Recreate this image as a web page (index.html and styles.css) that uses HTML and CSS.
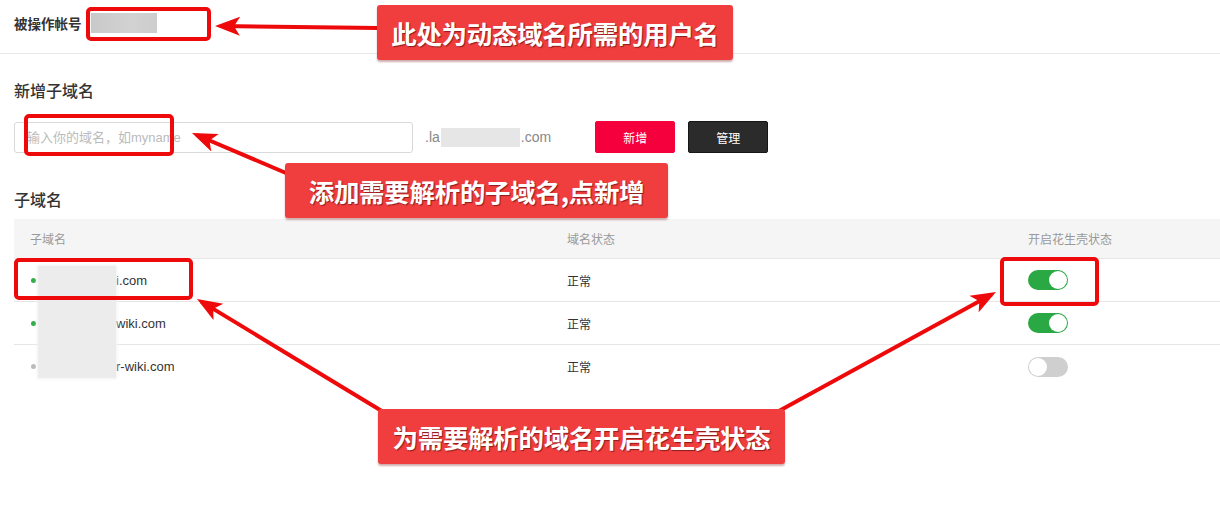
FILE: index.html
```html
<!DOCTYPE html>
<html lang="zh-CN">
<head>
<meta charset="utf-8">
<title>子域名管理</title>
<link rel="stylesheet" href="styles.css">
</head>
<body>
<div class="page">
  <div class="account">
    <span class="account-label">被操作帐号</span>
    <span class="account-value"></span>
  </div>

  <h2 class="section-title first">新增子域名</h2>
  <div class="add-row">
    <input class="domain-input" type="text" placeholder="输入你的域名，如myname">
    <span class="suffix">.la<span class="suffix-mask"></span>.com</span>
    <button class="btn btn-add">新增</button>
    <button class="btn btn-manage">管理</button>
  </div>

  <h2 class="section-title second">子域名</h2>
  <div class="table">
    <div class="row head">
      <div class="cell c1">子域名</div>
      <div class="cell">域名状态</div>
      <div class="cell">开启花生壳状态</div>
    </div>
    <div class="row">
      <div class="cell c1"><span class="dot on"></span><span class="hidden-part"></span>i.com</div>
      <div class="cell">正常</div>
      <div class="cell"><span class="toggle on"><span class="knob"></span></span></div>
    </div>
    <div class="row">
      <div class="cell c1"><span class="dot on"></span><span class="hidden-part"></span>wiki.com</div>
      <div class="cell">正常</div>
      <div class="cell"><span class="toggle on"><span class="knob"></span></span></div>
    </div>
    <div class="row last">
      <div class="cell c1"><span class="dot off"></span><span class="hidden-part"></span>r-wiki.com</div>
      <div class="cell">正常</div>
      <div class="cell"><span class="toggle off"><span class="knob"></span></span></div>
    </div>
    <div class="blur-mask"></div>
  </div>

  <svg class="annot" width="1220" height="520" viewBox="0 0 1220 520">
    <defs>
      <marker id="ah" markerUnits="userSpaceOnUse" markerWidth="26" markerHeight="20" viewBox="0 0 26 20" refX="20" refY="10" orient="auto">
        <path d="M0,0.5 L25,10 L0,19.5 L6,10 Z" fill="#ee0a0a"/>
      </marker>
    </defs>
    <g fill="none" stroke="#ee0a0a" stroke-width="4">
      <rect x="88" y="9" width="121" height="30" rx="3"/>
      <rect x="26" y="116" width="146" height="38" rx="3"/>
      <rect x="16" y="260" width="175" height="38" rx="3"/>
      <rect x="1002" y="259" width="95" height="45" rx="3"/>
    </g>
    <g stroke="#ee0a0a" stroke-width="4" marker-end="url(#ah)">
      <line x1="378" y1="28" x2="220" y2="26"/>
      <line x1="300" y1="179" x2="196.6" y2="135"/>
      <line x1="390" y1="416" x2="201.3" y2="301.6"/>
      <line x1="768" y1="417" x2="991.6" y2="294.4"/>
    </g>
  </svg>

  <div class="callout call-1">此处为动态域名所需的用户名</div>
  <div class="callout call-2">添加需要解析的子域名,点新增</div>
  <div class="callout call-3">为需要解析的域名开启花生壳状态</div>
</div>
</body>
</html>
```

FILE: styles.css
```css
* { box-sizing: border-box; }
html, body { margin: 0; padding: 0; background: #fff; }
body {
  font-family: "Liberation Sans", "Noto Sans CJK SC", sans-serif;
  color: #333;
}
.page {
  position: relative;
  width: 1220px;
  height: 520px;
  overflow: hidden;
}
.account {
  height: 54px;
  padding: 0 0 7px 14px;
  border-bottom: 1px solid #e8e8e8;
  display: flex;
  align-items: center;
}
.account-label {
  font-size: 13.5px;
  font-weight: 700;
  color: #333;
}
.account-value {
  width: 66px;
  height: 20px;
  margin-left: 9px;
  background: linear-gradient(90deg, #c9c9c9, #d2d2d2 60%, #cdcdcd);
}
.section-title {
  margin: 0;
  padding-left: 14px;
  font-size: 16px;
  line-height: 22px;
  font-weight: 500;
  color: #333;
}
.section-title.first { margin-top: 27px; }
.section-title.second { margin-top: 37px; }
.add-row {
  margin-top: 18px;
  padding-left: 14px;
  display: flex;
  align-items: center;
  height: 32px;
}
.domain-input {
  width: 399px;
  height: 31px;
  border: 1px solid #d9d9d9;
  border-radius: 3px;
  padding: 0 12px;
  font-family: "Liberation Sans", "Noto Sans CJK SC", sans-serif;
  font-size: 13px;
  color: #333;
  outline: none;
}
.domain-input::placeholder { color: #bbb; }
.suffix {
  margin-left: 12px;
  font-size: 14px;
  color: #888;
  display: flex;
  align-items: center;
}
.suffix-mask {
  display: inline-block;
  width: 79px;
  height: 19px;
  background: #e6e6e6;
  margin: 0 1px;
}
.btn {
  width: 80px;
  height: 32px;
  border-radius: 2px;
  font-family: "Liberation Sans", "Noto Sans CJK SC", sans-serif;
  font-size: 12px;
  color: #fff;
  cursor: pointer;
  padding: 0;
}
.btn-add {
  margin-left: 44px;
  background: #f5003d;
  border: 1px solid #f5003d;
}
.btn-manage {
  margin-left: 13px;
  background: #2b2b2b;
  border: 1px solid #161616;
}
.table {
  position: relative;
  margin: 7px 0 0 14px;
}
.row {
  display: grid;
  grid-template-columns: 553px 461px 1fr;
  height: 43px;
  border-bottom: 1px solid #e6e6e6;
  align-items: center;
  font-size: 12px;
  color: #333;
}
.row.head {
  height: 40px;
  background: #f5f5f5;
  color: #999;
}
.row.last { border-bottom: none; }
.cell { display: flex; align-items: center; }
.cell.c1 { padding-left: 16px; font-size: 13px; }
.row.head .cell.c1 { font-size: 12px; }
.dot {
  width: 5px;
  height: 5px;
  border-radius: 50%;
  margin: 0 3px 0 1px;
}
.dot.on { background: #31ad46; }
.dot.off { background: #bbb; }
.hidden-part {
  display: inline-block;
  width: 77px;
  height: 1px;
}
.toggle {
  position: relative;
  width: 40px;
  height: 20px;
  border-radius: 10px;
  display: inline-block;
}
.toggle.on { background: #2aa844; }
.toggle.off { background: #cfcfcf; }
.knob {
  position: absolute;
  top: 1px;
  width: 18px;
  height: 18px;
  border-radius: 50%;
  background: #fff;
}
.toggle.on .knob { left: 21px; }
.toggle.off .knob { left: 1px; }
.blur-mask {
  position: absolute;
  left: 24px;
  top: 47px;
  width: 78px;
  height: 112px;
  background: #ececec;
  box-shadow: 0 0 3px 1px #f2f2f2;
}
.annot {
  position: absolute;
  left: 0;
  top: 0;
  pointer-events: none;
}
.callout {
  position: absolute;
  height: 55px;
  background: #f03d3e;
  border-radius: 3px;
  box-shadow: 0 2px 2px rgba(120, 20, 20, 0.35);
  color: #fff;
  font-family: "Noto Sans CJK SC", sans-serif;
  font-weight: 700;
  font-size: 25.5px;
  letter-spacing: -0.3px;
  display: flex;
  align-items: center;
  justify-content: center;
  text-shadow: 1px 1px 1px rgba(60, 0, 0, 0.55);
}
.call-1 { left: 377px; top: 5px; width: 356px; }
.call-2 { left: 285px; top: 163px; width: 383px; }
.call-3 { left: 378px; top: 409px; width: 407px; }
```
